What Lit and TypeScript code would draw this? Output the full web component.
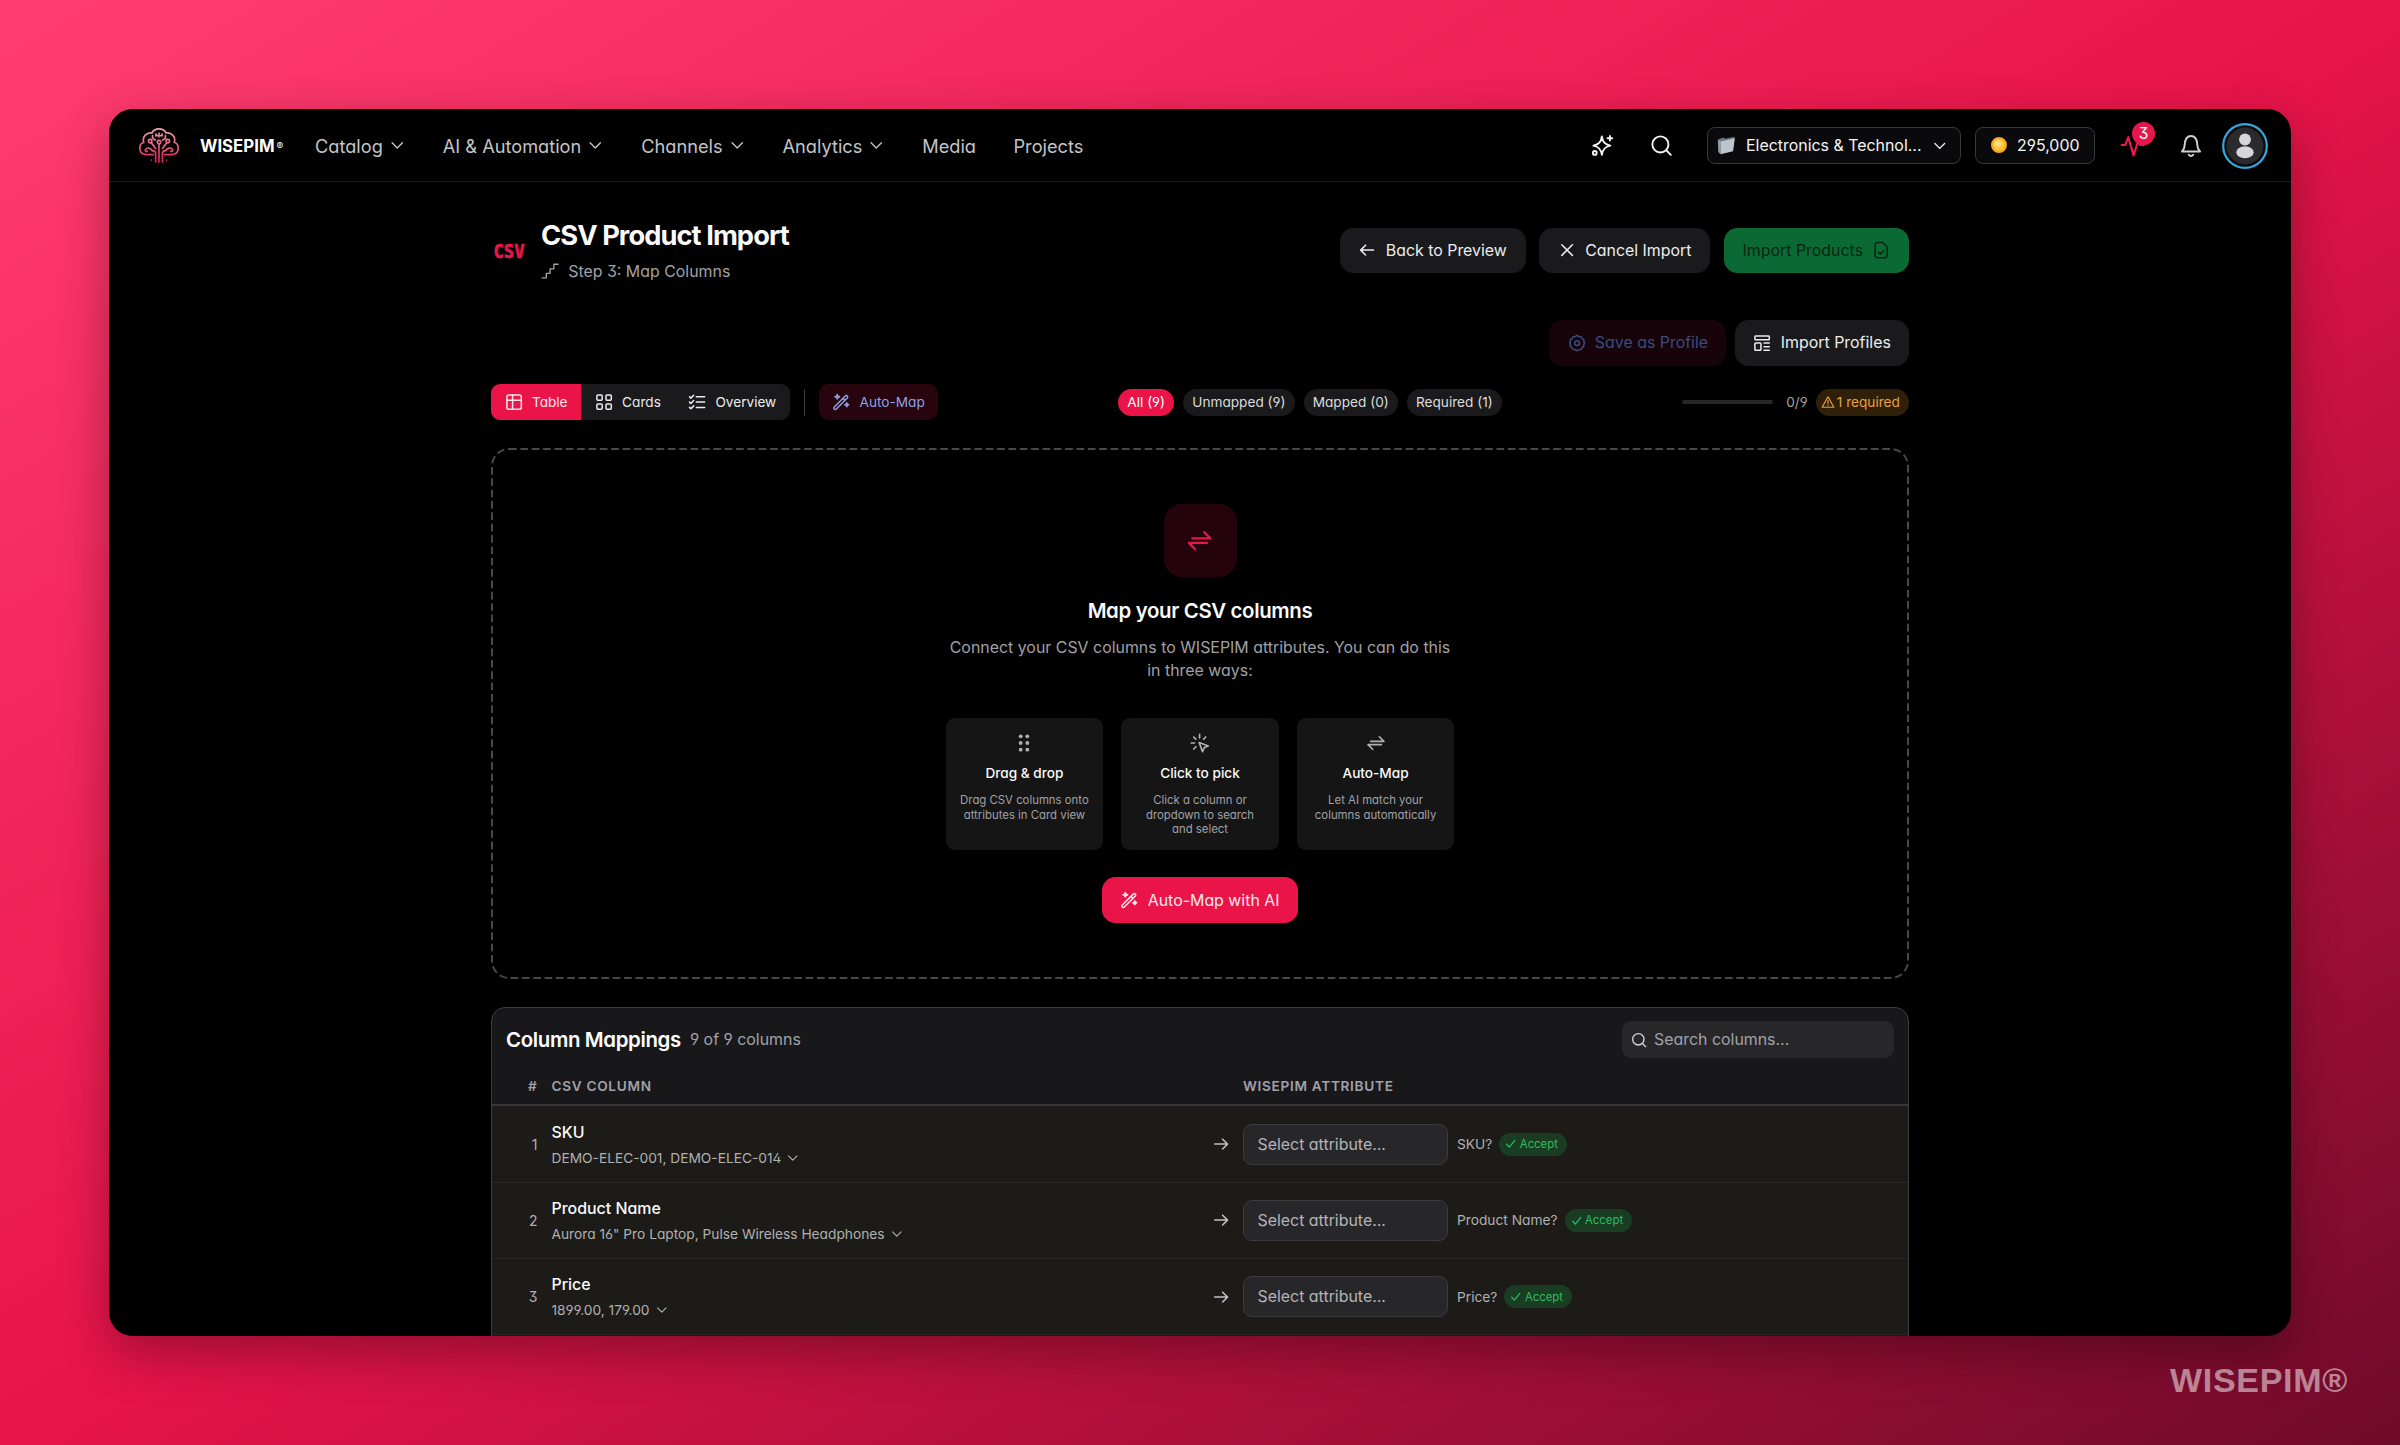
import { LitElement, css, html, svg } from 'lit';
import { customElement, property } from 'lit/decorators.js';
import { classMap } from 'lit/directives/class-map.js';

const icons: Record<string, any> = {
  'chevron': svg`<path d="M4.500 8.500l7.500 7.500 7.500-7.500"/>`,
  'search': svg`<circle cx="11" cy="11" r="8.500"/><path d="M17.200 17.200L22 22"/>`,
  'sparkle': svg`<path d="M11.500 2.500c.9 6 3 8.700 9 9.800-6 1.100-8.100 3.800-9 9.700-.9-5.900-3-8.600-9-9.700 6-1.100 8.100-3.800 9-9.800z"/><path d="M20 2v5M17.500 4.500h5"/><circle cx="4" cy="20" r="2"/>`,
  'pulse': svg`<path d="M1.500 11.500h3.500l3-7.500 5 17.500 4.500-14 1.500 4h3.500"/>`,
  'bell': svg`<path d="M3 17.500c1.700-1.500 2.500-3 2.700-6.500C6 5.500 7.500 2 12 2s6 3.500 6.300 9c.2 3.500 1 5 2.700 6.500z"/><path d="M9.800 20.800c1 1.500 3.400 1.500 4.400 0"/>`,
  'back': svg`<path d="M20.500 12H4M10 5.500L3.500 12l6.500 6.500"/>`,
  'forward': svg`<path d="M3.500 12H20M14 5.500l6.500 6.500-6.500 6.500"/>`,
  'close': svg`<path d="M5 5l14 14M19 5L5 19"/>`,
  'file': svg`<path d="M14 2H7.500C5 2 4 3 4 5.500v13C4 21 5 22 7.500 22h9c2.500 0 3.500-1 3.500-3.500V8z"/><path d="M8.500 15l2.500 2.500 4.500-5"/>`,
  'gear': svg`<path d="M9.600 3.300L12 1.800l2.400 1.500 2.800.3 1.500 2.400 2.300 1.700-.1 2.900 1 1.400-1 1.400.1 2.900-2.300 1.700-1.500 2.400-2.800.3L12 22.200l-2.400-1.500-2.800-.3L5.300 18 3 16.300l.1-2.900-1-1.400 1-1.400L3 7.700 5.300 6l1.500-2.400z"/><circle cx="12" cy="12" r="3.200"/>`,
  'profiles': svg`<rect x="2.500" y="2.500" width="19" height="5" rx="1"/><rect x="2.500" y="12" width="8" height="9.500" rx="1"/><path d="M14.500 12h7M14.500 16.700h7M14.500 21.400h7"/>`,
  'table': svg`<rect x="2.500" y="2.500" width="19" height="19" rx="2.500"/><path d="M2.500 9.500h19M10 2.500v19"/>`,
  'cards': svg`<rect x="2.500" y="2.500" width="7" height="7" rx="1.300"/><rect x="14.500" y="2.500" width="7" height="7" rx="1.300"/><rect x="2.500" y="14.500" width="7" height="7" rx="1.300"/><rect x="14.500" y="14.500" width="7" height="7" rx="1.300"/>`,
  'overview': svg`<path d="M11 5h11M11 12h11M11 19h11M2 5l1.800 1.800L7.500 3M2 12l1.800 1.800L7.500 10M2 19l1.800 1.800L7.500 17"/>`,
  'wand': svg`<path d="M3 18.500L17.500 4c1-1 2-.8 2.700 0s.8 1.700 0 2.500L5.700 21c-1 1-2 .8-2.700 0s-1-1.500 0-2.500zM14.500 7l2.700 2.700"/><path d="M7 2l.9 2.100L10 5l-2.100.9L7 8l-.9-2.100L4 5l2.100-.9zM19.500 13l.8 1.700 1.700.8-1.700.8-.8 1.700-.8-1.700-1.700-.8 1.700-.8z"/>`,
  'warning': svg`<path d="M12 3L2 21h20z"/><path d="M12 9.500v5M12 17.300v.5"/>`,
  'swap': svg`<path d="M2.500 14h16M2.500 14l5.500 5.500M21.500 10h-16M21.500 10L16 4.500"/>`,
  'grip': svg`<g fill="currentColor" stroke="none"><circle cx="8" cy="4" r="2.300"/><circle cx="16" cy="4" r="2.300"/><circle cx="8" cy="12" r="2.300"/><circle cx="16" cy="12" r="2.300"/><circle cx="8" cy="20" r="2.300"/><circle cx="16" cy="20" r="2.300"/></g>`,
  'click': svg`<path d="M11 11.500l11 4-4.800 2L15 22.500z"/><path d="M11.500 1.500v4.500M1.500 12h4M4.500 5l2.500 2.500M18.800 4.800L16.200 7.500M4.500 19.200l2.700-2.700"/>`,
  'steps': svg`<path d="M1.500 21H7v-6h5V9h5V3h5.500"/>`,
  'check': svg`<path d="M3.500 13l5.500 6L20.500 5"/>`,
};

const menu = [
  { label: 'Catalog', more: true },
  { label: 'AI & Automation', more: true },
  { label: 'Channels', more: true },
  { label: 'Analytics', more: true },
  { label: 'Media', more: false },
  { label: 'Projects', more: false },
];

const filters = ['All (9)', 'Unmapped (9)', 'Mapped (0)', 'Required (1)'];

const ways = [
  { icon: 'grip', title: 'Drag & drop', text: 'Drag CSV columns onto attributes in Card view' },
  { icon: 'click', title: 'Click to pick', text: 'Click a column or dropdown to search and select' },
  { icon: 'swap', title: 'Auto-Map', text: 'Let AI match your columns automatically' },
];

const columns = [
  { name: 'SKU', sample: 'DEMO-ELEC-001, DEMO-ELEC-014' },
  { name: 'Product Name', sample: 'Aurora 16" Pro Laptop, Pulse Wireless Headphones' },
  { name: 'Price', sample: '1899.00, 179.00' },
];

@customElement('app-icon')
export class AppIcon extends LitElement {
  @property({ type: String }) name = '';

  static get styles() {
    return css`
      :host {
        display: inline-block;
        flex: none;
        width: 18.2px;
        height: 18.2px;
      }

      svg {
        display: block;
        width: 100%;
        height: 100%;
        overflow: visible;
        fill: none;
        stroke: currentColor;
        stroke-width: var(--stroke, 2);
        stroke-linecap: round;
        stroke-linejoin: round;
      }
    `;
  }

  render() {
    return html`<svg viewBox="0 0 24 24">${icons[this.name]}</svg>`;
  }
}

@customElement('app-header')
export class AppHeader extends LitElement {
  static get styles() {
    return css`
      header {
        display: flex;
        align-items: center;
        box-sizing: border-box;
        height: 73px;
        padding: 1px 23px 0 30px;
        border-bottom: 1.5px solid #1d1d1f;
        color: #e4e4e7;
      }

      .logo {
        width: 40px;
        height: 35px;
        margin-right: 21px;
      }

      .brand {
        display: flex;
        align-items: center;
        gap: 2px;
        width: 115px;
        font-size: 16.8px;
        font-weight: 700;
        color: #fff;
      }

      .brand small {
        font-size: 10px;
        font-weight: 400;
      }

      nav {
        display: flex;
        gap: 37.5px;
        font-size: 18.2px;
        color: #c4c4c8;
      }

      nav span {
        display: flex;
        align-items: center;
        gap: 6px;
      }

      nav app-icon {
        width: 16.5px;
        height: 16.5px;
      }

      .tools {
        display: flex;
        align-items: center;
        margin-left: auto;
        font-size: 15.91px;
        color: #f4f4f5;
      }

      .tools app-icon {
        width: 22.7px;
        height: 22.7px;
      }

      .find {
        margin: 0 34px 0 36.5px;
      }

      .box {
        display: flex;
        align-items: center;
        box-sizing: border-box;
        height: 36.4px;
        border: 1.2px solid #38383c;
        border-radius: 8px;
        background: #0a0a0c;
      }

      .project {
        width: 254px;
        padding: 0 13px 0 8px;
        margin-right: 14px;
      }

      .project app-icon {
        width: 15.5px;
        height: 15.5px;
        margin-left: auto;
      }

      .folder {
        width: 20px;
        height: 20px;
        margin-right: 10px;
      }

      .coins {
        width: 120px;
        gap: 10px;
        padding-left: 15px;
      }

      .coin {
        box-sizing: border-box;
        width: 16px;
        height: 16px;
        border: 2px solid #f9a61c;
        border-radius: 50%;
        background: radial-gradient(circle at 40% 35%, #ffe28a, #f8c02e 65%);
      }

      .activity {
        position: relative;
        display: flex;
        margin: 0 34px 0 25px;
        color: #f0184d;
      }

      .tools .activity app-icon {
        width: 25px;
        height: 25px;
      }

      .badge {
        position: absolute;
        left: 12px;
        top: -11px;
        width: 23px;
        height: 23px;
        border-radius: 50%;
        background: #e8174b;
        color: #fff;
        font-size: 15.5px;
        line-height: 23px;
        text-align: center;
      }

      .bell {
        color: #d0d0d4;
      }

      .tools .bell {
        width: 24px;
        height: 24px;
      }

      .avatar {
        width: 46px;
        height: 46px;
        margin-left: 19px;
      }
    `;
  }

  render() {
    return html`
      <header>
        <svg class="logo" viewBox="0 0 118 102" fill="none" stroke="url(#brain)" stroke-width="5" stroke-linecap="round">
          <defs>
            <linearGradient id="brain" gradientUnits="userSpaceOnUse" x1="59" y1="0" x2="59" y2="102">
              <stop offset="0" stop-color="#f4a3b4"/>
              <stop offset="1" stop-color="#d81b4c"/>
            </linearGradient>
          </defs>
          <path d="M42 78H20C-3 76-2 46 14 42 8 24 24 11 38 14 46-2 72-2 80 14c14-3 30 10 24 28 16 4 17 34-6 36H76"/>
          <path d="M59 47v53M49 100V74c0-6-4-8-10-8M69 100V74c0-6 4-8 10-8"/>
          <path d="M49 60l-12-16M69 60l12-16M39 66c-4-9-16-10-20-3-2 4 2 7 5 5M79 66c4-9 16-10 20-3 2 4-2 7-5 5M40 22v8l8 5M78 22v8l-8 5"/>
          <circle cx="59" cy="41" r="5"/>
          <circle cx="33" cy="38" r="5"/>
          <circle cx="85" cy="38" r="5"/>
          <path d="M50 17v5h4M68 17v5h-4M59 15v10M37 94v.1M81 94v.1"/>
        </svg>
        <div class="brand">WISEPIM<small>®</small></div>
        <nav>
          ${menu.map(item => html`<span>${item.label}${item.more ? html`<app-icon name="chevron"></app-icon>` : null}</span>`)}
        </nav>
        <div class="tools">
          <app-icon name="sparkle"></app-icon>
          <app-icon class="find" name="search"></app-icon>
          <div class="box project">
            <svg class="folder" viewBox="0 0 20 20">
              <path d="M2 4.500l5.500-2 1.500 1.300L17.500 2c.8 0 1.200.3 1.100 1.200L17 15 4 18.500z" fill="#717981"/>
              <path d="M5 6.500L18.800 3.200 17.200 15.300c-.1.800-.5 1.100-1.200 1.300L4.500 19.200z" fill="#bcc5ce"/>
              <path d="M1.800 4.800L5 6.500 4.500 19.200 2.300 17z" fill="#929ba4"/>
            </svg>
            <span>Electronics &amp; Technol...</span>
            <app-icon name="chevron"></app-icon>
          </div>
          <div class="box coins"><span class="coin"></span>295,000</div>
          <div class="activity">
            <app-icon name="pulse"></app-icon>
            <span class="badge">3</span>
          </div>
          <app-icon class="bell" name="bell"></app-icon>
          <svg class="avatar" viewBox="0 0 46 46">
            <circle cx="23" cy="23" r="21.8" fill="#0a0a0b" stroke="#35a8de" stroke-width="2.2"/>
            <circle cx="23" cy="23" r="18.5" fill="#2b2b2e"/>
            <circle cx="23" cy="16.5" r="5.9" fill="#d6d6da"/>
            <ellipse cx="23" cy="29.3" rx="8.7" ry="6" fill="#d6d6da"/>
          </svg>
        </div>
      </header>
    `;
  }
}

@customElement('app-mappings')
export class AppMappings extends LitElement {
  static get styles() {
    return css`
      :host {
        display: block;
        height: 360px;
        border: 1.2px solid #3c3c3f;
        border-radius: 14px;
        overflow: hidden;
        background: #18181b;
      }

      .top {
        display: flex;
        align-items: center;
        gap: 9px;
        padding: 13px 14px 0;
        font-size: 15.91px;
        color: #a1a1aa;
      }

      h2 {
        margin: 0;
        font-size: 20.45px;
        font-weight: 600;
        letter-spacing: -0.018em;
        color: #fff;
      }

      .search {
        display: flex;
        align-items: center;
        box-sizing: border-box;
        width: 272px;
        height: 37px;
        gap: 7px;
        margin-left: auto;
        padding-left: 9px;
        border-radius: 9px;
        background: #27272a;
      }

      .search app-icon {
        width: 16px;
        height: 16px;
        color: #d4d4d8;
      }

      .row {
        display: grid;
        grid-template-columns: 45.5px 1fr 31px 665px;
        align-items: center;
        box-sizing: border-box;
        height: 76.35px;
        border-bottom: 1px solid #282826;
        background: #1c1b18;
        color: #b0b0b0;
      }

      .head {
        height: 48px;
        padding-top: 9px;
        border-bottom: 2px solid #37373a;
        background: none;
        font-size: 13.64px;
        font-weight: 600;
        letter-spacing: 0.05em;
        color: #a1a1aa;
      }

      .number {
        text-align: right;
        font-size: 14px;
      }

      .head .number {
        font-size: 13.64px;
      }

      .column {
        padding-left: 14px;
      }

      .name {
        font-size: 15.91px;
        font-weight: 500;
        line-height: 24px;
        color: #fafafa;
      }

      .sample {
        display: flex;
        align-items: center;
        gap: 5px;
        margin-top: 3px;
        font-size: 13.74px;
        line-height: 20px;
      }

      .sample app-icon {
        width: 13.6px;
        height: 13.6px;
      }

      .arrow app-icon {
        display: block;
        color: #c0c0c2;
      }

      .attribute {
        display: flex;
        align-items: center;
        font-size: 13.74px;
      }

      .select {
        box-sizing: border-box;
        width: 205px;
        height: 41px;
        margin-right: 9px;
        padding-left: 13.5px;
        border: 1.5px solid #3b3b3f;
        border-radius: 9px;
        background: #27272a;
        font-size: 15.91px;
        line-height: 39px;
        color: #b4b4b8;
      }

      .accept {
        display: flex;
        align-items: center;
        height: 23px;
        gap: 3px;
        margin-left: 7px;
        padding: 0 9px 0 6px;
        border-radius: 12px;
        background: #193c23;
        font-size: 11.36px;
        color: #2bbf5f;
      }

      .accept app-icon {
        --stroke: 2.6;
        width: 11.5px;
        height: 11.5px;
      }
    `;
  }

  render() {
    return html`
      <div class="top">
        <h2>Column Mappings</h2>
        <span>9 of 9 columns</span>
        <div class="search"><app-icon name="search"></app-icon>Search columns...</div>
      </div>
      <div class="row head">
        <span class="number">#</span>
        <span class="column">CSV COLUMN</span>
        <span></span>
        <span>WISEPIM ATTRIBUTE</span>
      </div>
      ${columns.map((column, i) => html`
        <div class="row">
          <span class="number">${i + 1}</span>
          <div class="column">
            <div class="name">${column.name}</div>
            <div class="sample">${column.sample}<app-icon name="chevron"></app-icon></div>
          </div>
          <span class="arrow"><app-icon name="forward"></app-icon></span>
          <div class="attribute">
            <div class="select">Select attribute...</div>
            ${column.name}?
            <span class="accept"><app-icon name="check"></app-icon>Accept</span>
          </div>
        </div>
      `)}
    `;
  }
}

@customElement('app-root')
export class AppRoot extends LitElement {
  static get styles() {
    return css`
      :host {
        display: block;
        position: relative;
        box-sizing: border-box;
        width: 2400px;
        height: 1445px;
        padding: 109px 109px 0;
        overflow: hidden;
        background: linear-gradient(to bottom right, #ff3d71 0%, #e81449 50%, #6e0a2a 100%);
        font-family: Inter, 'Liberation Sans', sans-serif;
        font-feature-settings: 'cv02', 'cv03', 'cv04', 'cv09', 'cv11';
      }

      .window {
        width: 2182px;
        height: 1227px;
        border-radius: 24px;
        overflow: hidden;
        background: #000;
        box-shadow: 0 18px 50px rgba(0, 0, 0, 0.32);
      }

      main {
        width: 1418px;
        margin: 0 auto;
        padding-top: 36px;
      }

      .title,
      .actions,
      .toolbar,
      .group,
      .button,
      .step {
        display: flex;
        align-items: center;
      }

      .csv {
        width: 36px;
        height: 36px;
        margin-right: 14px;
        overflow: visible;
        font: bold 20px 'DejaVu Sans Mono', monospace;
        fill: #e8174b;
        stroke: #e8174b;
        stroke-width: 0.7px;
      }

      h1 {
        margin: 0;
        font-size: 27.27px;
        font-weight: 700;
        line-height: 36px;
        letter-spacing: -0.034em;
        color: #fafafa;
      }

      .step {
        gap: 9px;
        margin-top: 6px;
        font-size: 15.91px;
        line-height: 23px;
        color: #a1a1a6;
      }

      .step app-icon {
        --stroke: 1.8;
      }

      .actions {
        justify-content: flex-end;
        gap: 13.64px;
        margin-left: auto;
      }

      .title .button {
        padding: 0 18.7px;
      }

      .actions.profiles {
        gap: 9px;
        margin: 37px 0 18.5px;
      }

      .button {
        box-sizing: border-box;
        height: 45.5px;
        gap: 9.1px;
        padding: 0 18.2px;
        border-radius: 13.6px;
        background: #1a1a1c;
        font-size: 15.91px;
        white-space: nowrap;
        color: #ececee;
      }

      .button.import {
        background: #0b6a34;
        color: #04260f;
      }

      .button.save {
        background: #17030a;
        color: #384c80;
      }

      .button.auto {
        background: #27040e;
        color: #8ba2e4;
      }

      .button.primary {
        background: #ea1449;
        color: #ffe6ec;
      }

      .small {
        height: 36.4px;
        padding: 0 13.64px;
        border-radius: 9px;
        font-size: 13.64px;
      }

      .toolbar {
        justify-content: space-between;
        font-size: 13.64px;
      }

      .group {
        gap: 13.64px;
      }

      .tabs {
        display: flex;
        border-radius: 9px;
        overflow: hidden;
      }

      .tabs .button {
        border-radius: 0;
      }

      .divider {
        width: 1.5px;
        height: 27px;
        background: #3a3a3d;
      }

      .filters {
        display: flex;
        gap: 9.1px;
      }

      .pill {
        height: 27.3px;
        padding: 0 9.1px;
        border-radius: 14px;
        background: #1a1a1c;
        line-height: 27px;
        color: #dcdcde;
      }

      .pill.active {
        background: #ea1449;
        color: #fff;
      }

      .progress {
        width: 91px;
        height: 4.5px;
        border-radius: 3px;
        background: #27272a;
      }

      .count {
        margin-right: -5px;
        color: #a1a1a6;
      }

      .pill.required {
        display: flex;
        align-items: center;
        gap: 2px;
        padding-left: 4.5px;
        background: #30200a;
        color: #e9a13b;
      }

      .required app-icon {
        width: 14px;
        height: 14px;
      }

      .intro {
        position: relative;
        display: flex;
        flex-direction: column;
        align-items: center;
        box-sizing: border-box;
        height: 531px;
        margin: 28px 0;
        padding-top: 56px;
      }

      .outline {
        position: absolute;
        inset: 0;
        width: 100%;
        height: 100%;
        fill: none;
        stroke: #48484b;
        stroke-width: 2;
        stroke-dasharray: 7.7 3.65;
      }

      .mark {
        display: grid;
        place-items: center;
        width: 73px;
        height: 73px;
        border-radius: 18px;
        background: #24030d;
        color: #e8174b;
      }

      .mark app-icon {
        width: 27.3px;
        height: 27.3px;
      }

      .intro h2 {
        margin: 18px 0 9px;
        font-size: 20.45px;
        font-weight: 600;
        line-height: 32px;
        letter-spacing: -0.018em;
        color: #fafafa;
      }

      .intro p {
        width: 509px;
        margin: 0;
        font-size: 15.91px;
        line-height: 23px;
        text-align: center;
        color: #a1a1a6;
      }

      .ways {
        display: flex;
        gap: 18.2px;
        margin: 36px 0 27.5px;
      }

      .way {
        box-sizing: border-box;
        width: 157.4px;
        height: 131.5px;
        padding: 16px 13.6px 0;
        border-radius: 9px;
        background: #151516;
        text-align: center;
        color: #b0b0b3;
      }

      .way app-icon {
        display: block;
        width: 20px;
        height: 20px;
        margin: -1px auto;
      }

      .way b {
        display: block;
        margin: 11px 0 10px;
        font-size: 13.64px;
        font-weight: 500;
        line-height: 20px;
        color: #fafafa;
      }

      .way span {
        display: block;
        font-size: 11.36px;
        line-height: 14.4px;
        color: #a1a1a6;
      }

      .watermark {
        position: absolute;
        right: 52px;
        bottom: 45px;
        font: bold 34px/40px 'Liberation Sans', sans-serif;
        letter-spacing: 0.7px;
        color: rgba(255, 255, 255, 0.5);
      }
    `;
  }

  render() {
    return html`
      <div class="window">
        <app-header></app-header>
        <main>
          <div class="title">
            <svg class="csv" viewBox="0 0 36 36">
              <text x="2.5" y="24.8" textLength="31" lengthAdjust="spacingAndGlyphs">CSV</text>
            </svg>
            <div>
              <h1>CSV Product Import</h1>
              <div class="step"><app-icon name="steps"></app-icon>Step 3: Map Columns</div>
            </div>
            <div class="actions">
              <div class="button"><app-icon name="back"></app-icon>Back to Preview</div>
              <div class="button"><app-icon name="close"></app-icon>Cancel Import</div>
              <div class="button import">Import Products<app-icon name="file"></app-icon></div>
            </div>
          </div>

          <div class="actions profiles">
            <div class="button save"><app-icon name="gear"></app-icon>Save as Profile</div>
            <div class="button"><app-icon name="profiles"></app-icon>Import Profiles</div>
          </div>

          <div class="toolbar">
            <div class="group">
              <div class="tabs">
                <div class="button small primary"><app-icon name="table"></app-icon>Table</div>
                <div class="button small"><app-icon name="cards"></app-icon>Cards</div>
                <div class="button small"><app-icon name="overview"></app-icon>Overview</div>
              </div>
              <div class="divider"></div>
              <div class="button small auto"><app-icon name="wand"></app-icon>Auto-Map</div>
            </div>
            <div class="filters">
              ${filters.map((label, i) => html`<span class=${classMap({ pill: true, active: i === 0 })}>${label}</span>`)}
            </div>
            <div class="group">
              <div class="progress"></div>
              <span class="count">0/9</span>
              <span class="pill required"><app-icon name="warning"></app-icon>1 required</span>
            </div>
          </div>

          <section class="intro">
            <svg class="outline" viewBox="0 0 1418 531"><rect x="1" y="1" width="1416" height="529" rx="17"/></svg>
            <div class="mark"><app-icon name="swap"></app-icon></div>
            <h2>Map your CSV columns</h2>
            <p>Connect your CSV columns to WISEPIM attributes. You can do this in three ways:</p>
            <div class="ways">
              ${ways.map(way => html`
                <div class="way">
                  <app-icon name=${way.icon}></app-icon>
                  <b>${way.title}</b>
                  <span>${way.text}</span>
                </div>
              `)}
            </div>
            <div class="button primary"><app-icon name="wand"></app-icon>Auto-Map with AI</div>
          </section>

          <app-mappings></app-mappings>
        </main>
      </div>
      <div class="watermark">WISEPIM®</div>
    `;
  }
}
